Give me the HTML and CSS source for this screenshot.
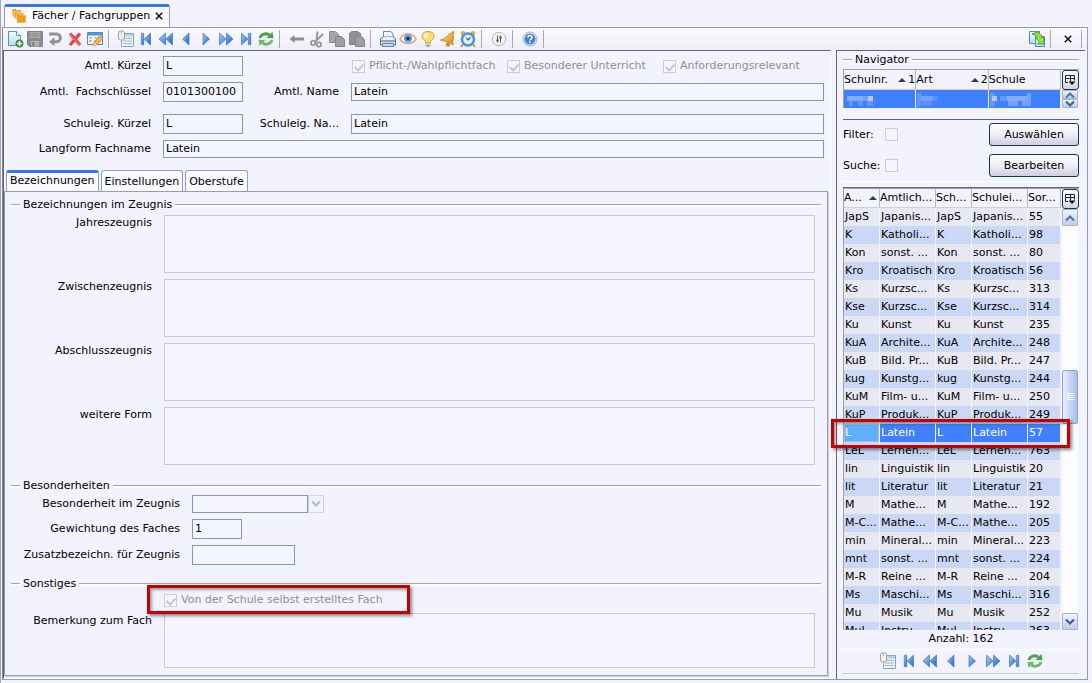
FILE: index.html
```html
<!DOCTYPE html>
<html lang="de">
<head>
<meta charset="utf-8">
<title>Fächer / Fachgruppen</title>
<link rel="stylesheet" href="styles.css">
</head>
<body>
<svg class="defs" aria-hidden="true">
  <defs>
    <linearGradient id="blue" x1="0" y1="0" x2="1" y2="1"><stop offset="0" stop-color="#a5ccf8"/><stop offset="1" stop-color="#1f63cc"/></linearGradient>
    <linearGradient id="gold" x1="0" y1="0" x2="1" y2="1"><stop offset="0" stop-color="#ffe08a"/><stop offset="1" stop-color="#d98a10"/></linearGradient>
    <linearGradient id="sheet" x1="0" y1="0" x2="0" y2="1"><stop offset="0" stop-color="#f4faff"/><stop offset="1" stop-color="#b5dcf8"/></linearGradient>
  </defs>
  <symbol id="folders" viewBox="0 0 16 16"><path d="M1 1h4l1 1h4v7H2z" fill="#f7a63a"/><path d="M3 4h4l1 1h5v6H4z" fill="#f08a10" stroke="#fff" stroke-width=".5"/><path d="M5 6h4l1 1h5v8H6z" fill="#f59a1b" stroke="#fff" stroke-width=".5"/></symbol>
  <symbol id="new" viewBox="0 0 18 18"><path d="M2.500 1.500h8l4 4v10h-12z" fill="url(#sheet)" stroke="#5592c9"/><path d="M10.500 1.500v4h4" fill="#fff" stroke="#5592c9"/><circle cx="13.500" cy="13.500" r="3.700" fill="#4f9a4a" stroke="#2f7a35" stroke-width=".6"/><path d="M13.500 11.300v4.400M11.300 13.500h4.400" stroke="#fff" stroke-width="1.400"/></symbol>
  <symbol id="save" viewBox="0 0 18 18"><path d="M1.500 1.500h15v15h-13l-2-2z" fill="#8f8f8f" stroke="#858585"/><path d="M4 2h10v6H4z" fill="#a9a9a9"/><path d="M5 4h8M5 6h8" stroke="#8b8b8b"/><path d="M5 11h8v5.500H5z" fill="#b1b1b1"/><path d="M6 12h2.500v4H6z" fill="#858585"/></symbol>
  <symbol id="undo" viewBox="0 0 18 18"><path d="M3 4h7.500a3.900 3.900 0 0 1 0 7.800H8" fill="none" stroke="#929292" stroke-width="3"/><path d="M8.500 7.200v9L3 11.800z" fill="#929292"/></symbol>
  <symbol id="delete" viewBox="0 0 18 18"><path d="M4 3.500l10 11.500M14 3.500L4 15" stroke="#e84444" stroke-width="3.400"/><path d="M3.500 4l10 11" stroke="#f58080" stroke-width="1"/></symbol>
  <symbol id="edit" viewBox="0 0 18 18"><path d="M1.500 2.500h15v12h-15z" fill="#f0f6fd" stroke="#5a87c2"/><path d="M2 3h14v2.500H2z" fill="#5b93dc"/><path d="M3 8h3M8 8h5M3 11h3M8 11h3" stroke="#7a93b3"/><path d="M7 16l1-3.500 6-6.500 3 2.500-6.500 6.500z" fill="#f4b949" stroke="#a5711c" stroke-width=".7"/><path d="M7 16l1-3 2 2z" fill="#f7dfba"/></symbol>
  <symbol id="table" viewBox="0 0 18 18"><path d="M4.500 3.500h12v13h-12z" fill="#f5faff" stroke="#80a6cc"/><path d="M5 4h11v2.500H5z" fill="#b5d0e8"/><path d="M6 8.500h9M6 11h9M6 13.500h9" stroke="#8fbbb4"/><path d="M9 6v10M12.500 6v10" stroke="#c5d6e8"/><rect x="1.500" y="1" width="6" height="9" rx="2" fill="#eeeeea" stroke="#a4a49c"/><path d="M4.500 1v3" stroke="#bbb"/></symbol>
  <symbol id="first" viewBox="0 0 18 18"><path d="M4.300 3.300h2.400v11.400H4.300z" fill="url(#blue)" stroke="#2a67c4" stroke-width=".6"/><path d="M13.500 3v12L7.200 9z" fill="url(#blue)" stroke="#2a67c4" stroke-width=".6"/></symbol>
  <symbol id="rewind" viewBox="0 0 18 18"><path d="M8.500 3v12L2 9zM15.500 3v12L9 9z" fill="url(#blue)" stroke="#2a67c4" stroke-width=".6"/></symbol>
  <symbol id="prev" viewBox="0 0 18 18"><path d="M12 3v12L5.500 9z" fill="url(#blue)" stroke="#2a67c4" stroke-width=".6"/></symbol>
  <symbol id="next" viewBox="0 0 18 18"><path d="M6 3v12l6.500-6z" fill="url(#blue)" stroke="#2a67c4" stroke-width=".6"/></symbol>
  <symbol id="forward" viewBox="0 0 18 18"><path d="M2.500 3v12L9 9zM9.500 3v12L16 9z" fill="url(#blue)" stroke="#2a67c4" stroke-width=".6"/></symbol>
  <symbol id="last" viewBox="0 0 18 18"><path d="M11.300 3.300h2.400v11.400h-2.400z" fill="url(#blue)" stroke="#2a67c4" stroke-width=".6"/><path d="M4.500 3v12l6.300-6z" fill="url(#blue)" stroke="#2a67c4" stroke-width=".6"/></symbol>
  <symbol id="refresh" viewBox="0 0 18 18"><path d="M3 8c1-4 6-5.500 9.500-3" fill="none" stroke="#48a04d" stroke-width="2.800"/><path d="M9.500 8l7 .3L15.500 2z" fill="#48a04d"/><path d="M15 10c-1 4-6 5.500-9.500 3" fill="none" stroke="#6bbb68" stroke-width="2.800"/><path d="M8.500 10l-7-.3L2.500 16z" fill="#6bbb68"/></symbol>
  <symbol id="back" viewBox="0 0 18 18"><path d="M1.500 9l5-4v2.500H16v3H6.500V13z" fill="#8e8e8e"/></symbol>
  <symbol id="cut" viewBox="0 0 18 18"><path d="M9.500 1.500l-1 9M15 4l-8 8" stroke="#999" stroke-width="2"/><circle cx="5" cy="13" r="2.200" fill="none" stroke="#8f8f8f" stroke-width="1.600"/><circle cx="11" cy="14.500" r="2.200" fill="none" stroke="#8f8f8f" stroke-width="1.600"/></symbol>
  <symbol id="copy" viewBox="0 0 18 18"><path d="M1.500 1.500h6l3 3v8h-9z" fill="#a5a5a5" stroke="#8c8c8c"/><path d="M7.500 6.500h6l3 3v7h-9z" fill="#a0a0a0" stroke="#858585"/></symbol>
  <symbol id="paste" viewBox="0 0 18 18"><path d="M1.500 3.500l2-2h6l3 2v11h-11z" fill="#8f8f8f" stroke="#828282"/><path d="M7.500 6.500h6l3 3v7h-9z" fill="#9e9e9e" stroke="#858585"/></symbol>
  <symbol id="print" viewBox="0 0 18 18"><path d="M4.500 1.500h7l2.500 2v6H4.500z" fill="#eef7ff" stroke="#5e86b8"/><path d="M1.500 9l2-2h11l2 2v6h-15z" fill="#d5dbe2" stroke="#66717f"/><path d="M4 7h10v3H4z" fill="#e7f2fd"/><path d="M2 11h14" stroke="#606a78" stroke-width="1"/><path d="M3.500 13.500h11v3h-11z" fill="#bad8f4" stroke="#5e86b8"/></symbol>
  <symbol id="eye" viewBox="0 0 18 18"><path d="M1 9c4-7 12-7 16 0-4 6-12 6-16 0z" fill="#fff" stroke="#d9a684" stroke-width="1.500"/><circle cx="9" cy="8.500" r="4" fill="#5f98e0"/><circle cx="9" cy="8.500" r="1.800" fill="#172f5c"/></symbol>
  <symbol id="bulb" viewBox="0 0 18 18"><path d="M6.500 11C1 8 2 1.500 9 1.500S17 8 11.500 11v2h-5z" fill="#ffdb70" stroke="#d9a333"/><circle cx="7" cy="5.500" r="2.500" fill="#fff4c4"/><path d="M6.500 12.500h5v3l-1.500 1.500H8l-1.500-1.500z" fill="#a5a5a5"/><path d="M6.500 14h5" stroke="#eee"/></symbol>
  <symbol id="bell" viewBox="0 0 18 18"><path d="M13 3c3 3 0 7 1 12-3-3-8-4-12.500-5C8 9 8 4 13 3z" fill="url(#gold)" stroke="#b87813" stroke-width=".8"/><circle cx="14" cy="2.700" r="1.600" fill="#e2a023"/><circle cx="9" cy="14.500" r="2.200" fill="#d08a18"/></symbol>
  <symbol id="clock" viewBox="0 0 18 18"><path d="M4 14l-2 3M14 14l2 3" stroke="#d99b25" stroke-width="2"/><circle cx="4" cy="3.500" r="2.400" fill="#e8aa39"/><circle cx="14" cy="3.500" r="2.400" fill="#e8aa39"/><circle cx="9" cy="9.500" r="6" fill="#e9f5ff" stroke="#4b93da" stroke-width="2.500"/><path d="M7 7.500L9 10l2.500-2.500" fill="none" stroke="#315f92" stroke-width="1.200"/></symbol>
  <symbol id="settings" viewBox="0 0 18 18"><circle cx="9" cy="9" r="6.700" fill="#f4f4f4" stroke="#b4b4b4"/><path d="M7.500 5.500v7M10.500 5.500v7" stroke="#555"/><circle cx="7.500" cy="10.500" r="1.200" fill="#555"/><circle cx="10.500" cy="7.500" r="1.200" fill="#555"/></symbol>
  <symbol id="help" viewBox="0 0 18 18"><circle cx="9" cy="9" r="7" fill="#dce9f7" stroke="#9bb5d4"/><circle cx="9" cy="9" r="5.500" fill="#4a85cd"/><path d="M7 7.500c0-3 4.200-2.500 4 0 0 1.300-2 1.400-2 3M9 11.500v1.500" fill="none" stroke="#fff" stroke-width="1.400"/></symbol>
  <symbol id="export" viewBox="0 0 18 18"><path d="M1.500 1.500h10v12h-10z" fill="url(#sheet)" stroke="#4b8fd0"/><path d="M7.500 6.500h9v10h-9z" fill="url(#sheet)" stroke="#4b8fd0"/><path d="M4 4c6-3 9.500-1 9.500 3.500H16V14H9.500l2-2.300L7.500 8H9C9 6 7 4.500 4 4z" fill="#9be03a" stroke="#388b25" stroke-width=".8"/></symbol>
  <symbol id="columns" viewBox="0 0 12 12"><path d="M4 8.500H1.500v-7h9v5M1.500 4.500h9M6.500 1.500v6" fill="none" stroke="#222"/><path d="M4.500 7.500h7L8 11z" fill="#111"/></symbol>
  <symbol id="up" viewBox="0 0 10 8"><path d="M1 6.500l4-4 4 4" fill="none" stroke="#5c779b" stroke-width="2.200"/></symbol>
  <symbol id="down" viewBox="0 0 10 8"><path d="M1 1.500l4 4 4-4" fill="none" stroke="currentColor" stroke-width="2.200"/></symbol>
  <symbol id="sort" viewBox="0 0 8 4"><path d="M0 4l4-4 4 4z" fill="#243f60"/></symbol>
  <symbol id="close" viewBox="0 0 8 8"><path d="M.8.800l6.400 6.400M7.200.800L.8 7.200" stroke="#111" stroke-width="1.500"/></symbol>
</svg>

<div class="doc-tab"><svg class="icon16"><use href="#folders"/></svg><span>Fächer / Fachgruppen</span><button class="plain" aria-label="Schließen"><svg class="icon8"><use href="#close"/></svg></button></div>

<div class="frame">
  <header class="toolbar">
    <button class="tool" aria-label="Neu"><svg><use href="#new"/></svg></button>
    <button class="tool" aria-label="Speichern"><svg><use href="#save"/></svg></button>
    <button class="tool" aria-label="Rückgängig"><svg><use href="#undo"/></svg></button>
    <button class="tool" aria-label="Löschen"><svg><use href="#delete"/></svg></button>
    <button class="tool" aria-label="Editieren"><svg><use href="#edit"/></svg></button>
    <i class="sep"></i>
    <button class="tool" aria-label="Liste"><svg><use href="#table"/></svg></button>
    <button class="tool" aria-label="Erster"><svg><use href="#first"/></svg></button>
    <button class="tool" aria-label="Seite zurück"><svg><use href="#rewind"/></svg></button>
    <button class="tool" aria-label="Zurück"><svg><use href="#prev"/></svg></button>
    <button class="tool" aria-label="Weiter"><svg><use href="#next"/></svg></button>
    <button class="tool" aria-label="Seite vor"><svg><use href="#forward"/></svg></button>
    <button class="tool" aria-label="Letzter"><svg><use href="#last"/></svg></button>
    <button class="tool" aria-label="Aktualisieren"><svg><use href="#refresh"/></svg></button>
    <i class="sep"></i>
    <button class="tool" aria-label="Vorheriges"><svg><use href="#back"/></svg></button>
    <button class="tool" aria-label="Ausschneiden"><svg><use href="#cut"/></svg></button>
    <button class="tool" aria-label="Kopieren"><svg><use href="#copy"/></svg></button>
    <button class="tool" aria-label="Einfügen"><svg><use href="#paste"/></svg></button>
    <i class="sep"></i>
    <button class="tool" aria-label="Drucken"><svg><use href="#print"/></svg></button>
    <button class="tool" aria-label="Ansicht"><svg><use href="#eye"/></svg></button>
    <button class="tool" aria-label="Hinweis"><svg><use href="#bulb"/></svg></button>
    <button class="tool" aria-label="Benachrichtigung"><svg><use href="#bell"/></svg></button>
    <button class="tool" aria-label="Wiedervorlage"><svg><use href="#clock"/></svg></button>
    <i class="sep"></i>
    <button class="tool" aria-label="Einstellungen"><svg><use href="#settings"/></svg></button>
    <i class="sep"></i>
    <button class="tool" aria-label="Hilfe"><svg><use href="#help"/></svg></button>
    <i class="sep"></i>
    <span class="spacer"></span>
    <button class="tool" aria-label="Exportieren"><svg><use href="#export"/></svg></button>
    <i class="sep"></i>
    <button class="tool" aria-label="Fenster schließen"><svg class="icon8"><use href="#close"/></svg></button>
    <i class="sep sep-end"></i>
  </header>

  <div class="panes">
    <main class="detail">
      <div class="head-form">
        <label for="kuerzel">Amtl. Kürzel</label>
        <input class="text" id="kuerzel" value="L" readonly>
        <div class="checks">
          <label class="check"><input type="checkbox" checked disabled>Pflicht-/Wahlpflichtfach</label>
          <label class="check"><input type="checkbox" checked disabled>Besonderer Unterricht</label>
          <label class="check"><input type="checkbox" checked disabled>Anforderungsrelevant</label>
        </div>
        <label for="schluessel">Amtl.&nbsp; Fachschlüssel</label>
        <input class="text" id="schluessel" value="0101300100" readonly>
        <label for="name">Amtl. Name</label>
        <input class="text low" id="name" value="Latein" readonly>
      </div>
      <div class="head-form">
        <label for="skuerzel">Schuleig. Kürzel</label>
        <input class="text" id="skuerzel" value="L" readonly>
        <label for="sname">Schuleig. Na...</label>
        <input class="text" id="sname" value="Latein" readonly>
        <label for="lang">Langform Fachname</label>
        <input class="text low wide" id="lang" value="Latein" readonly>
      </div>

      <div class="tabs" role="tablist">
        <button class="tab active" role="tab" aria-selected="true">Bezeichnungen</button>
        <button class="tab" role="tab">Einstellungen</button>
        <button class="tab" role="tab">Oberstufe</button>
      </div>
      <section class="tab-panel">
        <fieldset>
          <legend>Bezeichnungen im Zeugnis</legend>
          <div class="areas">
            <label for="jahr">Jahreszeugnis</label><textarea id="jahr" readonly></textarea>
            <label for="zwischen">Zwischenzeugnis</label><textarea id="zwischen" readonly></textarea>
            <label for="abschluss">Abschlusszeugnis</label><textarea id="abschluss" readonly></textarea>
            <label for="weitere">weitere Form</label><textarea id="weitere" readonly></textarea>
          </div>
        </fieldset>
        <fieldset>
          <legend>Besonderheiten</legend>
          <div class="specials">
            <label for="besonderheit">Besonderheit im Zeugnis</label>
            <div class="combo"><select id="besonderheit" disabled></select><span class="combo-arrow"><svg><use href="#down"/></svg></span></div>
            <label for="gewicht">Gewichtung des Faches</label>
            <input class="text short" id="gewicht" value="1" readonly>
            <label for="zusatz">Zusatzbezeichn. für Zeugnis</label>
            <input class="text medium" id="zusatz" readonly>
          </div>
        </fieldset>
        <fieldset class="other">
          <legend>Sonstiges</legend>
          <div class="own">
            <label class="check"><input type="checkbox" checked disabled>Von der Schule selbst erstelltes Fach</label>
            <div class="mark mark-own"></div>
          </div>
          <div class="areas">
            <label for="bemerkung">Bemerkung zum Fach</label><textarea id="bemerkung" readonly></textarea>
          </div>
        </fieldset>
      </section>
    </main>

    <aside class="navigator">
      <fieldset>
        <legend>Navigator</legend>
        <div class="grid-box">
          <table class="schools">
            <thead><tr><th><span>Schulnr.<b><svg class="sort"><use href="#sort"/></svg>1</b></span></th><th><span>Art<b><svg class="sort"><use href="#sort"/></svg>2</b></span></th><th>Schule</th></tr></thead>
            <tbody><tr>
              <td><svg class="mosaic" viewBox="0 0 50 15"><path d="M2 4h8v5H2zM10 4h8v5h-8z" fill="#85aaff"/><path d="M18 4h5v5h-5z" fill="#76a0ff"/><path d="M23 4h5v5h-5z" fill="#b0c8ff"/><path d="M4 9h4v5H4zM13 9h5v5h-5zM22 9h6v5h-6z" fill="#6595ff"/></svg></td>
              <td><svg class="mosaic" viewBox="0 0 50 15"><path d="M0 1h4v14H0z" fill="#6595ff"/><path d="M4 4h12v5H4z" fill="#76a0ff"/><path d="M16 4h5v5h-5zM5 9h10v5H5z" fill="#5b8dff"/></svg></td>
              <td><svg class="mosaic" viewBox="0 0 50 15"><path d="M0 1h5v14H0zM10 4h7v5h-7z" fill="#6595ff"/><path d="M2 4h5v5H2z" fill="#b0c8ff"/><path d="M17 4h20v5H17z" fill="#85aaff"/><path d="M18 9h10v5H18zM32 9h9v5h-9zM37 1h4v8h-4z" fill="#76a0ff"/></svg></td>
            </tr></tbody>
          </table>
          <div class="scroll">
            <button class="corner" aria-label="Spalten"><svg><use href="#columns"/></svg></button>
            <button class="arrow half" aria-label="Nach oben"><svg><use href="#up"/></svg></button>
            <button class="arrow half" aria-label="Nach unten"><svg><use href="#down"/></svg></button>
          </div>
        </div>
      </fieldset>
      <hr>
      <div class="filter">
        <label for="filter">Filter:</label><input type="checkbox" id="filter" disabled><button class="push">Auswählen</button>
        <label for="suche">Suche:</label><input type="checkbox" id="suche" disabled><button class="push">Bearbeiten</button>
      </div>
      <hr>
      <div class="list-wrap">
        <div class="grid-box">
          <div class="clip">
          <table class="subjects">
            <colgroup><col class="c-code"><col class="c-name"><col class="c-code"><col class="c-name"><col class="c-num"></colgroup>
            <thead><tr><th><span>A...<b><svg class="sort"><use href="#sort"/></svg></b></span></th><th>Amtlich...</th><th>Sch...</th><th>Schulei...</th><th>Sor...</th></tr></thead>
            <tbody>
              <tr><td>JapS</td><td>Japanis...</td><td>JapS</td><td>Japanis...</td><td>55</td></tr>
              <tr><td>K</td><td>Katholi...</td><td>K</td><td>Katholi...</td><td>98</td></tr>
              <tr><td>Kon</td><td>sonst. ...</td><td>Kon</td><td>sonst. ...</td><td>80</td></tr>
              <tr><td>Kro</td><td>Kroatisch</td><td>Kro</td><td>Kroatisch</td><td>56</td></tr>
              <tr><td>Ks</td><td>Kurzsc...</td><td>Ks</td><td>Kurzsc...</td><td>313</td></tr>
              <tr><td>Kse</td><td>Kurzsc...</td><td>Kse</td><td>Kurzsc...</td><td>314</td></tr>
              <tr><td>Ku</td><td>Kunst</td><td>Ku</td><td>Kunst</td><td>235</td></tr>
              <tr><td>KuA</td><td>Archite...</td><td>KuA</td><td>Archite...</td><td>248</td></tr>
              <tr><td>KuB</td><td>Bild. Pr...</td><td>KuB</td><td>Bild. Pr...</td><td>247</td></tr>
              <tr><td>kug</td><td>Kunstg...</td><td>kug</td><td>Kunstg...</td><td>244</td></tr>
              <tr><td>KuM</td><td>Film- u...</td><td>KuM</td><td>Film- u...</td><td>250</td></tr>
              <tr><td>KuP</td><td>Produk...</td><td>KuP</td><td>Produk...</td><td>249</td></tr>
              <tr class="selected"><td>L</td><td>Latein</td><td>L</td><td>Latein</td><td>57</td></tr>
              <tr><td>LeL</td><td>Lernen...</td><td>LeL</td><td>Lernen...</td><td>763</td></tr>
              <tr><td>lin</td><td>Linguistik</td><td>lin</td><td>Linguistik</td><td>20</td></tr>
              <tr><td>lit</td><td>Literatur</td><td>lit</td><td>Literatur</td><td>21</td></tr>
              <tr><td>M</td><td>Mathe...</td><td>M</td><td>Mathe...</td><td>192</td></tr>
              <tr><td>M-C...</td><td>Mathe...</td><td>M-C...</td><td>Mathe...</td><td>205</td></tr>
              <tr><td>min</td><td>Mineral...</td><td>min</td><td>Mineral...</td><td>223</td></tr>
              <tr><td>mnt</td><td>sonst. ...</td><td>mnt</td><td>sonst. ...</td><td>224</td></tr>
              <tr><td>M-R</td><td>Reine ...</td><td>M-R</td><td>Reine ...</td><td>204</td></tr>
              <tr><td>Ms</td><td>Maschi...</td><td>Ms</td><td>Maschi...</td><td>316</td></tr>
              <tr><td>Mu</td><td>Musik</td><td>Mu</td><td>Musik</td><td>252</td></tr>
              <tr><td>MuI</td><td>Instru...</td><td>MuI</td><td>Instru...</td><td>263</td></tr>
            </tbody>
          </table>
          </div>
          <div class="scroll">
            <button class="corner" aria-label="Spalten"><svg><use href="#columns"/></svg></button>
            <button class="arrow" aria-label="Nach oben"><svg><use href="#up"/></svg></button>
            <div class="track"><div class="thumb"></div></div>
            <button class="arrow" aria-label="Nach unten"><svg><use href="#down"/></svg></button>
          </div>
        </div>
        <div class="mark mark-row"></div>
      </div>
      <div class="count">Anzahl: 162</div>
      <nav class="pager">
        <button class="tool" aria-label="Liste"><svg><use href="#table"/></svg></button>
        <button class="tool" aria-label="Erster"><svg><use href="#first"/></svg></button>
        <button class="tool" aria-label="Seite zurück"><svg><use href="#rewind"/></svg></button>
        <button class="tool" aria-label="Zurück"><svg><use href="#prev"/></svg></button>
        <button class="tool" aria-label="Weiter"><svg><use href="#next"/></svg></button>
        <button class="tool" aria-label="Seite vor"><svg><use href="#forward"/></svg></button>
        <button class="tool" aria-label="Letzter"><svg><use href="#last"/></svg></button>
        <button class="tool" aria-label="Aktualisieren"><svg><use href="#refresh"/></svg></button>
      </nav>
    </aside>
  </div>
</div>
</body>
</html>
```
FILE: styles.css
```css
* { box-sizing: border-box; }

body {
  display: flex;
  flex-direction: column;
  height: 100vh;
  margin: 0;
  padding: 4px 4px 3px 1px;
  border-left: 1px solid #a8a8a8;
  background: #f3f3ff;
  color: #000;
  font: 11px/14px "DejaVu Sans", sans-serif;
}

button, input, select, textarea { font: inherit; color: inherit; margin: 0; }
label { white-space: nowrap; }
.defs { position: absolute; width: 0; height: 0; }
.icon16 { width: 16px; height: 16px; }
.icon8 { width: 8px; height: 8px; }
.plain { display: flex; padding: 0; border: 0; background: none; }

.doc-tab {
  display: flex;
  align-items: center;
  align-self: flex-start;
  gap: 5px;
  height: 23px;
  margin-left: 2px;
  padding: 0 6px 3px;
  border: 1px solid #8ba3c0;
  border-top: 3px solid #3376ee;
  border-bottom: 0;
  border-radius: 3px 3px 0 0;
  background: #fbfbff;
}

.frame {
  display: flex;
  flex: 1;
  flex-direction: column;
  min-height: 0;
  border: 1px solid #8f9db5;
  border-left-color: #7c8790;
}

.toolbar {
  display: flex;
  flex: none;
  align-items: center;
  height: 22px;
  padding: 0 5px 0 2px;
  background: linear-gradient(#fafaff, #ededf8);
}
.tool {
  display: flex;
  align-items: center;
  justify-content: center;
  width: 20px;
  height: 20px;
  padding: 0;
  border: 0;
  background: none;
}
.tool svg { width: 18px; height: 18px; }
.tool .icon8 { width: 8px; height: 8px; }
.sep { width: 1px; height: 18px; margin: 0 7px 0 3px; background: #a6a6ae; }
.sep-end { margin-right: 0; }
.spacer { flex: 1; }

.panes { display: flex; flex: 1; gap: 5px; min-height: 0; }

.detail {
  display: flex;
  flex: 1;
  flex-direction: column;
  min-width: 0;
  padding: 5px 2px 2px 0;
  border: 1px solid #666;
  border-right-color: #fff;
  border-bottom-color: #fff;
}

.head-form {
  display: grid;
  grid-template-columns: 147px 80px 84px 1fr;
  gap: 6px 12px;
  align-items: center;
  margin: 0 4px 12px 0;
}
.head-form > label { text-align: right; }
.text {
  width: 100%;
  min-width: 0;
  height: 20px;
  padding: 0 2px 1px;
  border: 1px solid #7f9ab8;
  background: #f5f5ff;
}
.low { height: 18px; }
.wide { grid-column: 2 / -1; }
.short { width: 50px; }
.medium { width: 103px; }

.checks {
  display: grid;
  grid-column: 3 / -1;
  grid-template-columns: 155px 156px auto;
  margin-left: 97px;
}
.check { display: flex; align-items: center; gap: 4px; color: #8f8f93; }
input[type="checkbox"] {
  flex: none;
  width: 13px;
  height: 13px;
  appearance: none;
  border: 1px solid #cdcdd8;
  background: #f6f6fa;
}
input[type="checkbox"]:checked::after {
  content: "";
  display: block;
  width: 4px;
  height: 7px;
  margin: 1px 0 0 3px;
  border: solid #c6c6d2;
  border-width: 0 2px 2px 0;
  transform: rotate(42deg);
}

.tabs { display: flex; gap: 2px; padding-left: 2px; }
.tab {
  height: 21px;
  padding: 2px 3px 0;
  border: 1px solid #8f9fba;
  border-bottom: 0;
  border-radius: 3px 3px 0 0;
  background: #fbfbff;
}
.tab.active { padding: 0 3px 3px; border-top: 3px solid #3376ee; }

.tab-panel {
  flex: 1;
  padding: 6px 6px 5px;
  border: 1px solid #8f9fba;
  box-shadow: 1px 1px #d0d0de;
}

fieldset { min-width: 0; margin: 0; padding: 0; border: 0; }
legend {
  display: flex;
  align-items: center;
  gap: 3px;
  width: 100%;
  padding: 0;
}
legend::before, legend::after {
  content: "";
  height: 2px;
  border-top: 1px solid #a4a4ac;
  background: #fff;
}
legend::before { width: 9px; }
legend::after { flex: 1; }

.areas {
  display: grid;
  grid-template-columns: 141px 1fr;
  gap: 6px 12px;
  padding: 3px 6px 0 0;
}
.areas label { padding-top: 1px; text-align: right; }
textarea {
  width: 100%;
  height: 58px;
  padding: 2px;
  border: 1px solid #cacad6;
  background: #f5f5ff;
  resize: none;
}
.tab-panel fieldset + fieldset { margin-top: 14px; }
.tab-panel fieldset + .other { margin-top: 12px; }
.specials {
  display: grid;
  grid-template-columns: 169px 1fr;
  gap: 6px 12px;
  align-items: center;
  padding-top: 2px;
}
.specials label { text-align: right; }
.combo { display: flex; }
.combo select {
  width: 116px;
  height: 18px;
  appearance: none;
  border: 1px solid #7f9ab8;
  border-radius: 0;
  background: #f5f5ff;
  opacity: 1;
}
.combo-arrow {
  display: flex;
  align-items: center;
  justify-content: center;
  width: 16px;
  height: 18px;
  border: 1px solid #cfcfd8;
  border-radius: 2px;
  color: #bcbcc6;
}
.combo-arrow svg { width: 10px; height: 8px; }
.own { position: relative; padding: 2px 0 3px 153px; }
.own + .areas textarea { height: 55px; }

.mark {
  position: absolute;
  border: 3px solid #c80000;
  box-shadow: 2px 2px 3px rgba(0, 0, 0, .45), inset 2px 2px 3px rgba(0, 0, 0, .35);
  pointer-events: none;
}
.mark-own { top: -6px; left: 136px; width: 263px; height: 29px; }

.navigator {
  display: flex;
  flex-direction: column;
  width: 249px;
  margin-right: 2px;
  padding: 2px 6px 5px;
  border-top: 1px solid #666;
  border-left: 1px solid #666;
}
.grid-box { display: flex; border-left: 1px solid #a0a0aa; border-top: 1px solid #a0a0aa; }
.navigator fieldset .grid-box { margin-top: 2px; }
table { width: 100%; border-spacing: 0; table-layout: fixed; }
th {
  height: 20px;
  padding: 0;
  border-right: 1px solid #b9b9c6;
  border-bottom: 1px solid #d0d0da;
  font-weight: normal;
  text-align: left;
  white-space: nowrap;
  overflow: hidden;
}
th span { display: flex; justify-content: space-between; }
th b { display: flex; align-items: center; font-weight: normal; }
.sort { width: 8px; height: 4px; margin-right: 2px; }
td {
  height: 18px;
  padding: 0 0 0 1px;
  border-right: 1px solid #f3f3ff;
  white-space: nowrap;
  overflow: hidden;
}
.schools { flex: 1; }
.schools td { height: 17px; background: #3f80ff; }
.mosaic { display: block; width: 50px; height: 15px; }
.subjects th { height: 19px; }
.subjects td { background: #e8e8f2; }
.subjects tr:nth-child(even) td { background: #cad8f6; }
.subjects tr.selected td { background: #3f80ff; color: #fff; }
.subjects tr.selected td:first-child { background: #5cb0ff; box-shadow: inset 0 0 0 1px #b4bccc; }
.c-code { width: 36px; }
.c-name { width: 56px; }

.scroll { display: flex; flex: none; flex-direction: column; align-items: center; width: 18px; }
.corner {
  display: flex;
  align-items: center;
  justify-content: center;
  flex: none;
  width: 17px;
  height: 20px;
  padding: 0;
  border: 1px solid #17365e;
  border-radius: 3px;
  background: linear-gradient(#fff, #d4d4e0);
}
.corner svg { flex: none; width: 12px; height: 12px; }
.arrow {
  display: flex;
  align-items: center;
  justify-content: center;
  flex: none;
  width: 16px;
  height: 17px;
  padding: 0;
  border: 1px solid #a4b4d2;
  border-radius: 1px;
  background: linear-gradient(#f2f5ff, #bccbf0);
  color: #455f86;
}
.arrow svg { width: 10px; height: 8px; }
.half { height: 9px; }
.track { flex: 1; width: 16px; padding-top: 144px; background: #fcfcff; }
.thumb {
  height: 54px;
  border: 1px solid #8ba3d0;
  border-radius: 2px;
  background:
    repeating-linear-gradient(#fff 0 1px, transparent 1px 2px) center / 7px 8px no-repeat,
    linear-gradient(90deg, #e8eeff, #a9bdea);
}

hr {
  flex: none;
  width: 100%;
  height: 7px;
  margin: 5px 0 0;
  border: 0;
  border-top: 1px solid #fff;
  border-bottom: 1px solid #666;
}
.filter {
  display: grid;
  grid-template-columns: 38px 1fr 90px;
  gap: 8px 4px;
  align-items: center;
  padding-top: 3px;
}
.push {
  height: 23px;
  padding: 0;
  border: 1px solid #17365e;
  border-radius: 3px;
  background: linear-gradient(#fff, #eeeef8 50%, #cfcfdc);
}
.filter + hr { margin-top: 4px; }

.list-wrap { position: relative; display: flex; flex: 1; min-height: 0; }
.list-wrap .grid-box { flex: 1; min-width: 0; }
.clip { flex: 1; min-width: 0; overflow: hidden; }
.mark-row { top: 231px; right: 9px; left: -12px; height: 29px; }

.count { padding: 2px 0 3px; border-bottom: 1px solid #fff; text-align: center; }
.pager { display: flex; justify-content: center; gap: 1px; padding: 1px 0 2px; border-bottom: 1px solid #c6c6da; }
```
